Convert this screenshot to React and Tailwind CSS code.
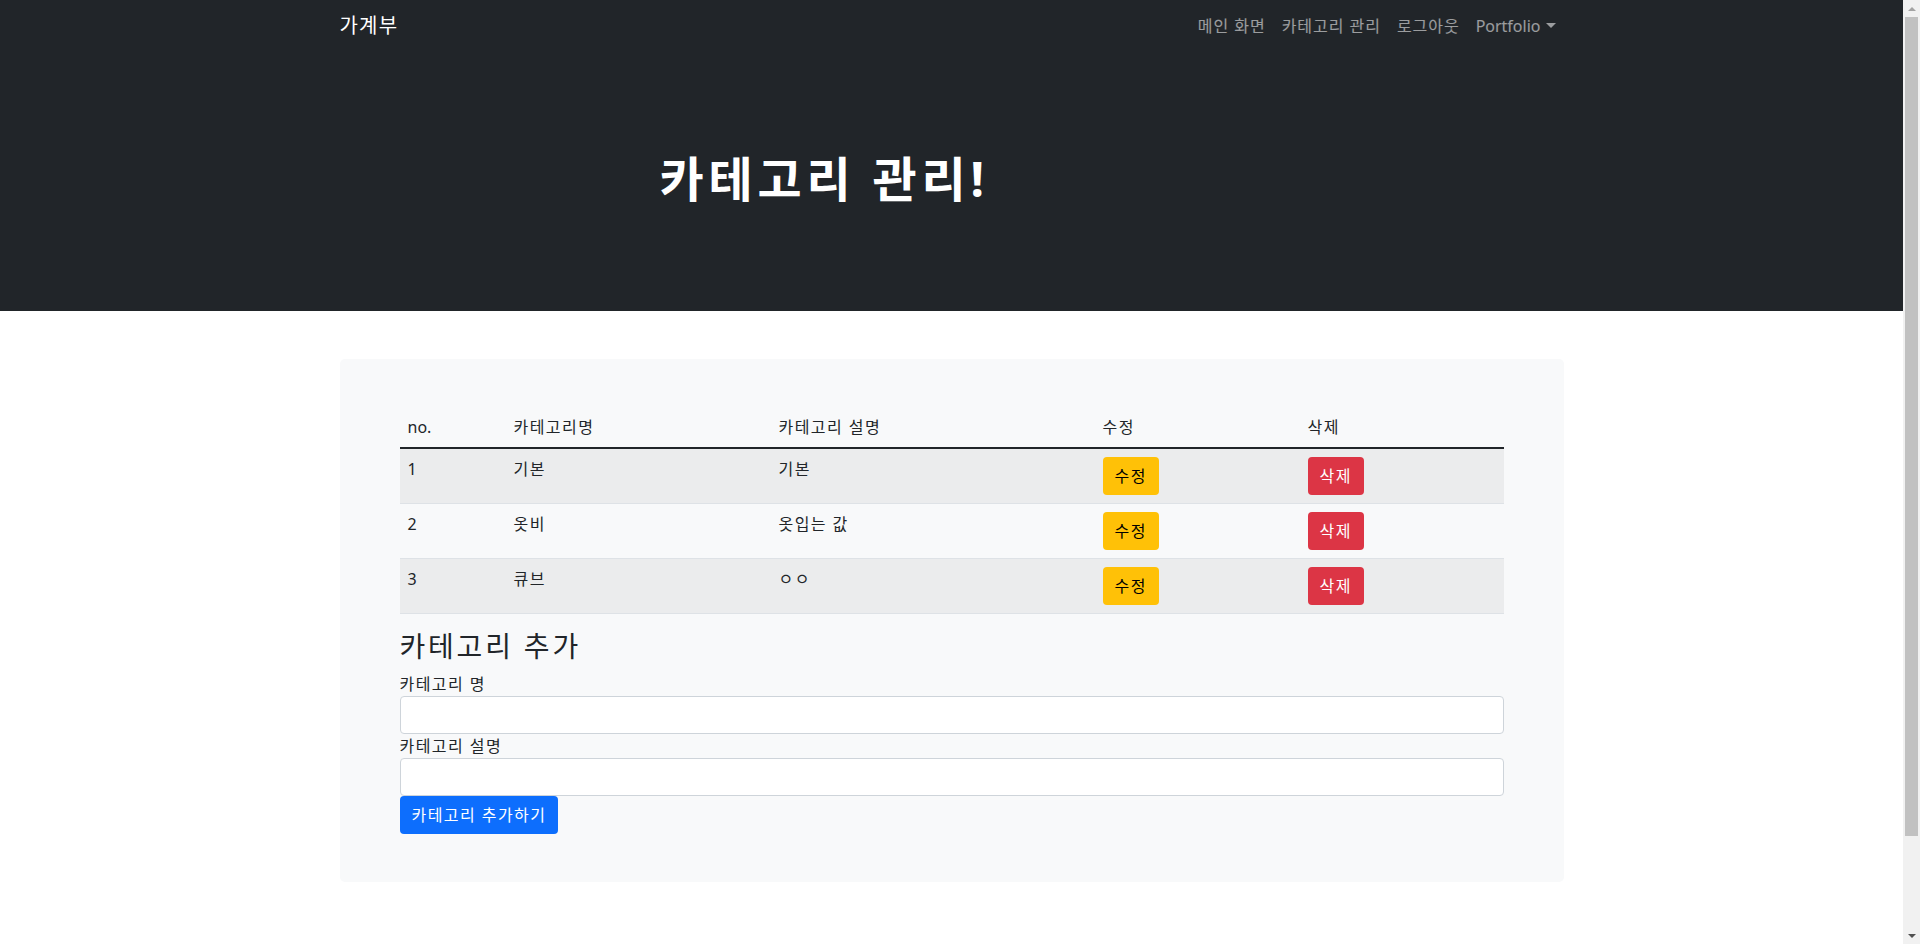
import React from 'react';

const FONT = { fontFamily: '"Noto Sans", "Noto Sans CJK KR", sans-serif' };

const rows = [
  { no: 1, name: '기본', desc: '기본' },
  { no: 2, name: '옷비', desc: '옷입는 값' },
  { no: 3, name: '큐브', desc: 'ㅇㅇ' },
];

const NavLink = ({ children, caret, latin }) => (
  <a
    className={`px-2 py-2 text-base leading-6 text-white/55 flex items-center ${latin ? 'tracking-normal' : ''}`}
    href="#"
  >
    {children}
    {caret && (
      <span className="ml-[5px] inline-block w-0 h-0 border-x-[5px] border-x-transparent border-t-[5px] border-t-white/55" />
    )}
  </a>
);

// Window scrollbar as seen in the screenshot
const Scrollbar = () => (
  <div className="fixed top-0 right-0 h-screen w-[17px] bg-[#f1f1f1] flex flex-col items-center">
    <div className="h-[17px] flex items-center justify-center">
      <span className="w-0 h-0 border-x-[4px] border-x-transparent border-b-[4px] border-b-[#a3a3a3]" />
    </div>
    <div className="flex-1 w-full px-[2px]">
      <div className="h-[819px] w-full bg-[#c1c1c1]" />
    </div>
    <div className="h-[17px] flex items-center justify-center">
      <span className="w-0 h-0 border-x-[4px] border-x-transparent border-t-[4px] border-t-[#505050]" />
    </div>
  </div>
);

export default function App() {
  return (
    <div className="min-h-[1046px] bg-white text-[#212529] tracking-[0.09em]" style={FONT}>
      <div className="mr-[17px]">
        {/* Dark header: navbar + title */}
        <div className="bg-[#212529]">
          <nav className="h-14 pb-[5px] w-[1224px] mx-auto flex items-center justify-between">
            <a className="text-xl leading-[30px] text-white tracking-[0.06em]" href="#">가계부</a>
            <div className="flex items-center tracking-[0.06em]">
              <NavLink>메인 화면</NavLink>
              <NavLink>카테고리 관리</NavLink>
              <NavLink>로그아웃</NavLink>
              <NavLink caret latin>Portfolio</NavLink>
            </div>
          </nav>
          <div className="h-[255px] pb-[10px] w-[1224px] mx-auto flex items-center pl-[320px]">
            <h1 className="text-[48px] leading-[1.2] font-bold text-white tracking-[0.1em]">카테고리 관리!</h1>
          </div>
        </div>

        {/* Content box */}
        <div className="w-[1224px] mx-auto mt-12 bg-[#f8f9fa] rounded-[5px] px-[60px] py-12">
          <table className="w-full table-fixed border-collapse text-base leading-6">
            <colgroup>
              <col className="w-[106px]" />
              <col className="w-[265px]" />
              <col className="w-[324px]" />
              <col className="w-[205px]" />
              <col />
            </colgroup>
            <thead>
              <tr className="border-b-2 border-[#212529]">
                <th className="p-2 text-left font-normal tracking-normal">no.</th>
                <th className="p-2 text-left font-normal">카테고리명</th>
                <th className="p-2 text-left font-normal">카테고리 설명</th>
                <th className="p-2 text-left font-normal">수정</th>
                <th className="p-2 text-left font-normal">삭제</th>
              </tr>
            </thead>
            <tbody>
              {rows.map((r, i) => (
                <tr
                  key={r.no}
                  className={`border-b border-[#dee2e6] align-top ${i % 2 === 0 ? 'bg-[#ebeced]' : ''}`}
                >
                  <td className="p-2 tracking-normal">{r.no}</td>
                  <td className="p-2">{r.name}</td>
                  <td className="p-2">{r.desc}</td>
                  <td className="p-2">
                    <button className="h-[38px] px-3 rounded-[4px] bg-[#ffc107] text-black">수정</button>
                  </td>
                  <td className="p-2">
                    <button className="h-[38px] px-3 rounded-[4px] bg-[#dc3545] text-white">삭제</button>
                  </td>
                </tr>
              ))}
            </tbody>
          </table>

          <h3 className="mt-4 mb-2 text-[28px] leading-[1.2] tracking-[0.1em]">카테고리 추가</h3>
          <label className="block leading-6">카테고리 명</label>
          <input className="block w-full h-[38px] bg-white border border-[#ced4da] rounded-[4px] px-3" />
          <label className="block leading-6">카테고리 설명</label>
          <input className="block w-full h-[38px] bg-white border border-[#ced4da] rounded-[4px] px-3" />
          <button className="block h-[38px] px-3 rounded-[4px] bg-[#0d6efd] text-white">카테고리 추가하기</button>
        </div>
      </div>
      <Scrollbar />
    </div>
  );
}
